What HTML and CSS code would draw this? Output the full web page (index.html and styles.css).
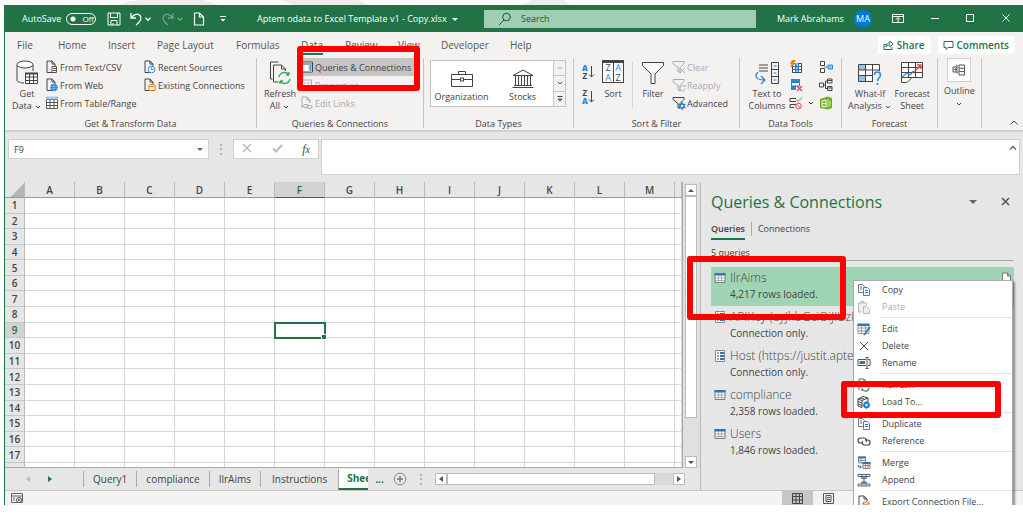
FILE: index.html
```html
<!DOCTYPE html>
<html lang="en">
<head>
  <meta charset="UTF-8">
  <meta name="viewport" content="width=device-width, initial-scale=1.0">
  <title>Aptem odata to Excel Template v1 - Copy.xlsx</title>
  <link rel="stylesheet" href="styles.css">
</head>
<body>
  <!-- Shared icons -->
  <svg class="sprite">
    <symbol id="i-page" viewBox="0 0 14 14"><path d="M7 12.500H2V1h5l3 3v2M7 1v3h3" fill="none" stroke="#444"/></symbol>
    <symbol id="i-table" viewBox="0 0 12 12"><path d="M1 1.500h10v9H1z" fill="#fff" stroke="#777"/><path d="M1 6h10M1 8.500h10M4.500 3v7.500M7.500 3v7.500" stroke="#aaa"/><path d="M.5 1h11v2.500H.5z" fill="#2f75b5"/></symbol>
    <symbol id="i-param" viewBox="0 0 12 12"><path d="M1.500 .5h9v11h-9z" fill="#fff" stroke="#888"/><path d="M3 3h2M3 6h2M3 9h2" stroke="#555"/><path d="M6 2h4v2H6zM6 5h4v2H6zM6 8h4v2H6z" fill="#2f75b5"/></symbol>
    <symbol id="i-copy" viewBox="0 0 14 14"><path d="M1.500 1.500h4l2 2v6h-6z" fill="#fff" stroke="#777"/><path d="M6.500 4.500h4l2 2v6h-6z" fill="#fff" stroke="#777"/><path d="M3 4h2M3 6h2M8 7.500h3M8 9.500h3" stroke="#2f75b5"/></symbol>
    <symbol id="i-down" viewBox="0 0 8 8"><path d="M2 3l2 2 2-2" fill="none" stroke="currentColor"/></symbol>
    <symbol id="i-funnel" viewBox="0 0 14 14"><path d="M1 1.500h11v2L8 7.500V12H6V7.500L1 3.500z" fill="none" stroke="currentColor"/></symbol>
  </svg>

  <svg class="backdrop" viewBox="0 0 1023 5" preserveAspectRatio="none"><path d="M115 5Q125 1 135 0H200L216 5zM277 0H355L366 5H290zM519 5L530 0H562L568 5z" fill="#ececec"/></svg>

  <div class="window">
    <header class="title-bar">
      <label class="autosave">AutoSave <input type="checkbox" class="switch"><span class="switch-off">Off</span></label>
      <div class="quick">
        <button aria-label="Save"><svg width="14" height="14" viewBox="0 0 14 14"><path d="M1 1h12v12H1zM3.500 1v4.500h7V1M4 13V8.500h6V13M6 13v-2" fill="none" stroke="#fff"/></svg></button>
        <button aria-label="Undo"><svg width="14" height="14" viewBox="0 0 14 14"><path d="M2 1v5h5M2 6C5 2 9 1 11 3.500S12 9 7 13" fill="none" stroke="#fff" stroke-width="1.300"/></svg><svg width="10" height="10"><use href="#i-down"/></svg></button>
        <button aria-label="Redo" class="faded"><svg width="14" height="14" viewBox="0 0 14 14"><path d="M12 1v5H7M12 6C9 2 5 1 3 3.500S2 9 7 13" fill="none" stroke="#fff" stroke-width="1.300"/></svg><svg width="10" height="10"><use href="#i-down"/></svg></button>
        <button aria-label="New"><svg width="12" height="14" viewBox="0 0 12 14"><path d="M1.500 1h5l4 4v8h-9zM6.500 1v4h4" fill="none" stroke="#fff" stroke-width="1.200"/></svg></button>
        <button aria-label="Customise" class="customise"><svg width="8" height="8" viewBox="0 0 8 8"><path d="M1 1.500h6" stroke="#fff"/><path d="M1.500 4h5L4 6.500z" fill="#fff"/></svg></button>
      </div>
      <div class="doc-name">Aptem odata to Excel Template v1 - Copy.xlsx <span class="caret"></span></div>
      <label class="search"><svg width="14" height="14" viewBox="0 0 14 14"><circle cx="8.500" cy="5" r="3.800" fill="none" stroke="#185c37"/><path d="M6 8L1 13" stroke="#185c37"/></svg><input type="text" placeholder="Search" aria-label="Search"></label>
      <div class="account">Mark Abrahams <span class="avatar">MA</span></div>
      <div class="win-buttons">
        <button aria-label="Ribbon options"><svg width="12" height="10" viewBox="0 0 12 10"><path d="M.5 .5h11v8H.5zM.5 2.500h11M6 8V4M4 5.500l2-2 2 2" fill="none" stroke="#fff"/></svg></button>
        <button aria-label="Minimise"><svg width="10" height="10" viewBox="0 0 10 10"><path d="M1 4.500h8" stroke="#fff"/></svg></button>
        <button aria-label="Maximise"><svg width="10" height="10" viewBox="0 0 10 10"><path d="M1.500 .5h7v7h-7z" fill="none" stroke="#fff"/></svg></button>
        <button aria-label="Close"><svg width="10" height="10" viewBox="0 0 10 10"><path d="M1.500 .5l7 7M8.500 .5l-7 7" stroke="#fff"/></svg></button>
      </div>
    </header>

    <nav class="tabs">
      <a href="#" class="t-file">File</a>
      <a href="#" class="t-home">Home</a>
      <a href="#" class="t-insert">Insert</a>
      <a href="#" class="t-layout">Page Layout</a>
      <a href="#" class="t-formulas">Formulas</a>
      <a href="#" class="t-data active">Data</a>
      <a href="#" class="t-review">Review</a>
      <a href="#" class="t-view">View</a>
      <a href="#" class="t-dev">Developer</a>
      <a href="#" class="t-help">Help</a>
      <button class="pill"><svg width="11" height="11" viewBox="0 0 11 11"><path d="M3 4.500H1v5h8V7M3 7c0-3 2-4 4-4V1l3 3-3 3V5C5 5 4 5.500 3 7z" fill="none" stroke="#217346"/></svg>Share</button>
      <button class="pill"><svg width="11" height="11" viewBox="0 0 11 11"><path d="M1 1.500h9v6H5L3 9.500v-2H1z" fill="none" stroke="#217346"/></svg>Comments</button>
    </nav>

    <div class="ribbon">
      <section class="group">
        <div class="tools get">
          <button class="big"><svg width="24" height="26" viewBox="0 0 24 26"><path d="M2 5v15c0 2 4 3 7 3M18 5v6" fill="none" stroke="#444"/><ellipse cx="10" cy="4.500" rx="8" ry="3.500" fill="#fafafa" stroke="#444"/><path d="M10.500 13.500h12v10h-12zM10.500 17h12M10.500 20.500h12M14.500 14v9M18.500 14v9" fill="#fff" stroke="#444"/><path d="M10 12.500h13v2H10z" fill="#444"/></svg>Get<br>Data <svg width="8" height="8"><use href="#i-down"/></svg></button>
          <div class="list">
            <button><svg width="14" height="14" viewBox="0 0 14 14"><use href="#i-page"/><path d="M7 6.500h4.500v6H7zM8 8.500h3M8 10.500h3" fill="#fff" stroke="#555"/></svg>From Text/CSV</button>
            <button><svg width="14" height="14" viewBox="0 0 14 14"><use href="#i-page"/><circle cx="9" cy="9.500" r="3.700" fill="#2b88d8"/><path d="M6 8.500h6M6 10.500h6M9 6v7" stroke="#8cc5f2" stroke-width=".6"/></svg>From Web</button>
            <button><svg width="14" height="14" viewBox="0 0 14 14"><path d="M1.500 3.500h11v9h-11zM1.500 6.500h11M1.500 9.500h11M5 4v8M9 4v8" fill="#fff" stroke="#555"/><path d="M1 .5h3.500v3H1zM5.300 .5h3.500v3H5.300zM9.600 .5H13v3H9.600z" fill="#8cc5f2"/></svg>From Table/Range</button>
          </div>
          <div class="list">
            <button><svg width="14" height="14" viewBox="0 0 14 14"><use href="#i-page"/><circle cx="8.500" cy="9.500" r="3.300" fill="#fff" stroke="#2b88d8"/><path d="M8.500 7.500v2h2" fill="none" stroke="#2b88d8"/></svg>Recent Sources</button>
            <button><svg width="14" height="14" viewBox="0 0 14 14"><use href="#i-page"/><path d="M6 7.500v5h6v-5z" fill="#fff" stroke="#e0761a"/><ellipse cx="9" cy="7.500" rx="3" ry="1.200" fill="#fff" stroke="#e0761a"/></svg>Existing Connections</button>
          </div>
        </div>
        <h2>Get &amp; Transform Data</h2>
      </section>

      <section class="group">
        <div class="tools refresh">
          <button class="big"><svg width="24" height="26" viewBox="0 0 24 26"><path d="M2.500 19V2h8M5.500 22V5h8l4 4v2M13.500 5v4h4M5.500 22h5M2.500 19h2" fill="none" stroke="#444"/><path d="M11 17c1-5 8-6 10-2v-3M21 15h-3M22 19c-1 5-8 6-10 2v3M12 21h3" fill="none" stroke="#33a852" stroke-width="1.300"/></svg>Refresh<br>All <svg width="8" height="8"><use href="#i-down"/></svg></button>
          <div class="list">
            <button class="on"><svg width="12" height="12" viewBox="0 0 12 12"><path d="M.5 1h11v10H.5zM.5 3h11" fill="#fff" stroke="#444"/><path d="M7.500 3.500h3.500V11H7.500z" fill="#8cc5f2"/><path d="M9 5h1M9 7h1M9 9h1" stroke="#2f75b5"/></svg>Queries &amp; Connections</button>
            <button disabled><svg width="12" height="12" viewBox="0 0 12 12"><path d="M1.500 1h9v10h-9zM3 4h2M6 4h3M3 7h2M6 7h3" fill="none" stroke="#aaa"/></svg>Properties</button>
            <button disabled><svg width="12" height="14" viewBox="0 0 12 14"><path d="M1 12V1h5l3 3v3M6 1v3h3" fill="none" stroke="#aaa"/><rect x="2.500" y="8.500" width="5" height="3" rx="1.500" fill="none" stroke="#aaa"/><rect x="6" y="9.500" width="5" height="3" rx="1.500" fill="none" stroke="#aaa"/></svg>Edit Links</button>
          </div>
        </div>
        <h2>Queries &amp; Connections</h2>
      </section>

      <section class="group">
        <div class="tools types">
          <div class="gallery">
            <button><svg width="24" height="20" viewBox="0 0 24 20"><path d="M1.500 5.500h21v12h-21zM8.500 5V2.500h7V5M1.500 10.500H10M14 10.500h8.500" fill="none" stroke="#444"/><rect x="10.500" y="9" width="3" height="3" fill="#fff" stroke="#444"/></svg>Organization</button>
            <button><svg width="24" height="20" viewBox="0 0 24 20"><path d="M2 6.500L12 1l10 5.500zM1.500 18.500h21M3 16.500h18M4.500 7v9M7.500 7v9M10.500 7v9M13.500 7v9M16.500 7v9M19.500 7v9" fill="none" stroke="#444"/></svg>Stocks</button>
            <div class="gallery-nav">
              <button aria-label="Up" disabled><svg width="8" height="8" viewBox="0 0 8 8"><path d="M2 5l2-2 2 2" fill="none" stroke="#aaa"/></svg></button>
              <button aria-label="Down"><svg width="8" height="8"><use href="#i-down"/></svg></button>
              <button aria-label="More"><svg width="8" height="8" viewBox="0 0 8 8"><path d="M1.500 1.500h5M2 4l2 2 2-2z" fill="none" stroke="#444"/></svg></button>
            </div>
          </div>
        </div>
        <h2>Data Types</h2>
      </section>

      <section class="group">
        <div class="tools sort">
          <div class="az">
            <button aria-label="Sort A to Z"><span class="letters"><b>A</b><i>Z</i></span><svg width="7" height="14" viewBox="0 0 7 14"><path d="M3.500 1v11M1 9.500L3.500 12 6 9.500" fill="none" stroke="#444"/></svg></button>
            <button aria-label="Sort Z to A"><span class="letters"><i>Z</i><b>A</b></span><svg width="7" height="14" viewBox="0 0 7 14"><path d="M3.500 1v11M1 9.500L3.500 12 6 9.500" fill="none" stroke="#444"/></svg></button>
          </div>
          <button class="big"><span class="sort-box"><i>Z</i><b>A</b><b>A</b><i>Z</i></span>Sort</button>
          <span class="rule"></span>
          <button class="big"><svg width="24" height="26" viewBox="0 0 24 26"><path d="M1.500 2.500h21v3L14 14v9.500h-4V14L1.500 5.500z" fill="#fafafa" stroke="#444"/></svg>Filter</button>
          <div class="list">
            <button disabled><svg width="14" height="14" viewBox="0 0 14 14"><use href="#i-funnel"/><path d="M8 8l5 5M13 8l-5 5" stroke="#aaa"/></svg>Clear</button>
            <button disabled><svg width="14" height="14" viewBox="0 0 14 14"><use href="#i-funnel"/><path d="M8 10c0-3 4-3 5-1V7M13 10.500c0 3-4 3-5 1v2" fill="none" stroke="#aaa"/></svg>Reapply</button>
            <button><svg width="14" height="14" viewBox="0 0 14 14"><use href="#i-funnel"/><path d="M10 6v8M6.500 8l7 4M13.500 8l-7 4" stroke="#1e7fd0" stroke-width="1.300"/><circle cx="10" cy="10" r="2" fill="#fff" stroke="#1e7fd0" stroke-width="1.500"/></svg>Advanced</button>
          </div>
        </div>
        <h2>Sort &amp; Filter</h2>
      </section>

      <section class="group">
        <div class="tools data">
          <button class="big"><svg width="26" height="26" viewBox="0 0 26 26"><path d="M5 5h9M5 8h9M5 11h9M17.500 2.500h7v21h-7zM17.500 9.500h7M17.500 16.500h7" fill="none" stroke="#444"/><path d="M19.500 6h3M19.500 13h3M19.500 20h3" stroke="#2b88d8"/><path d="M4 12c-4 4-2 8 6 8M7 16l4 4-4 4" fill="none" stroke="#2b88d8" stroke-width="1.300"/></svg>Text to<br>Columns</button>
          <div class="mini">
            <button aria-label="Flash Fill"><svg width="14" height="14" viewBox="0 0 14 14"><path d="M3.500 3.500h9v9h-9z" fill="#fff" stroke="#444"/><path d="M6 3h3v9H6z" fill="#8cc5f2"/><path d="M3.500 6.500h9M3.500 9.500h9M9.500 3.500v9M6.500 3.500v9" stroke="#2f75b5"/><path d="M3 0h4L5 3h2L1 8l1.500-4H1z" fill="#f07d18"/></svg></button>
            <button aria-label="Consolidate"><svg width="14" height="14" viewBox="0 0 14 14"><path d="M1.500 1.500h4v4h-4zM1.500 8.500h4v4h-4z" fill="#fff" stroke="#444"/><path d="M5 7h4" stroke="#2b88d8"/><path d="M9 5h4.500v4H9z" fill="#8cc5f2" stroke="#2b88d8"/></svg></button>
            <button aria-label="Remove Duplicates"><svg width="14" height="14" viewBox="0 0 14 14"><path d="M2 1h9v3H2zM2 8h5v4H2z" fill="#2b88d8"/><path d="M2.500 4.500h8V8h-8z" fill="#fff" stroke="#2f75b5"/><path d="M8 8l5 5M13 8l-5 5" stroke="#e8404a" stroke-width="1.200"/></svg></button>
            <button aria-label="Relationships"><svg width="14" height="14" viewBox="0 0 14 14"><path d="M.5 5h4v4h-4zM8.500 1h4.500v4H8.500zM8.500 8.500h4.500v4H8.500zM8.500 2.500H13M8.500 10H13M4.500 7h2M8 3H6.500v7.500H8" fill="none" stroke="#444"/></svg></button>
            <button aria-label="Data Validation" class="wide"><svg width="14" height="14" viewBox="0 0 14 14"><path d="M7 2.500H1v3h6M7 8.500H1v3h4" fill="none" stroke="#444"/><path d="M7 3.500l2 2 4-4" fill="none" stroke="#33a852"/><circle cx="9.500" cy="10" r="2.800" fill="#fff" stroke="#e8404a"/><path d="M7.500 8l4 4" stroke="#e8404a"/></svg><svg width="8" height="8"><use href="#i-down"/></svg></button>
            <button aria-label="Data Model"><svg width="14" height="14" viewBox="0 0 14 14"><path d="M1 3l8-2.500L13 2v10l-4 1.500L1 12z" fill="#70ad23"/><path d="M3 5l4-1v7l-4-.5zM3 7.700h4" fill="none" stroke="#fff"/><path d="M9 3v8.500M11 4.500v6" stroke="#d3eab0"/></svg></button>
          </div>
        </div>
        <h2>Data Tools</h2>
      </section>

      <section class="group">
        <div class="tools forecast">
          <button class="big"><svg width="26" height="26" viewBox="0 0 26 26"><path d="M1.500 4.500h21v17h-21z" fill="#fff" stroke="#444"/><path d="M2 5h6v5H2zM2 15h6v6H2z" fill="#8cc5f2"/><path d="M1.500 10h21M1.500 15.500h21M8.500 4.500v17M15.500 4.500v17" stroke="#444"/><path d="M16 11h8v13h-8z" fill="#f3f2f1"/><path d="M17.500 15c0-4 6-4 6 0 0 3-3 3-3 6M20.500 23v2" fill="none" stroke="#2b88d8" stroke-width="1.600"/></svg>What-If<br>Analysis <svg width="8" height="8"><use href="#i-down"/></svg></button>
          <button class="big"><svg width="24" height="26" viewBox="0 0 24 26"><path d="M1.500 2.500h21v15H12L7 22.500H1.500z" fill="#fff" stroke="#444"/><path d="M1.500 7.500h21M1.500 12.500h21M1.500 17.500H12M8.500 2.500v15M15.500 2.500v15" stroke="#444"/><path d="M2 17l5-4 3 2 3-3" fill="none" stroke="#2b88d8" stroke-width="1.300"/><path d="M12 12l3-1 6-6M17 5h4v4" fill="none" stroke="#e8404a" stroke-width="1.300"/></svg>Forecast<br>Sheet</button>
        </div>
        <h2>Forecast</h2>
      </section>

      <section class="group">
        <div class="tools outline">
          <button class="big"><span class="boxed"><svg width="14" height="12" viewBox="0 0 14 12"><path d="M5 3H1v5h4M7 1h5.500v10H7zM7 4.300h5.500M7 7.600h5.500M5 .5v9" fill="none" stroke="#555"/><path d="M2 5.500h3M3.500 4v3" stroke="#2b88d8"/></svg></span>Outline<br><svg width="8" height="8"><use href="#i-down"/></svg></button>
        </div>
      </section>
      <button class="collapse" aria-label="Collapse the ribbon"><svg width="10" height="8" viewBox="0 0 10 8"><path d="M1.500 5.500L5 2l3.500 3.500" fill="none" stroke="#444"/></svg></button>
    </div>

    <div class="formula-bar">
      <label class="name-box"><input type="text" value="F9" aria-label="Name box"><span class="caret dark"></span></label>
      <span class="dots">⋮</span>
      <div class="fx">
        <button aria-label="Cancel"><svg width="10" height="10" viewBox="0 0 10 10"><path d="M1 1l8 8M9 1L1 9" stroke="#bbb" stroke-width="1.500"/></svg></button>
        <button aria-label="Enter"><svg width="11" height="10" viewBox="0 0 11 10"><path d="M1 5.500L4 8.500 10 2" fill="none" stroke="#bbb" stroke-width="2"/></svg></button>
        <button aria-label="Insert function" class="fx-btn">f<small>x</small></button>
      </div>
      <div class="formula"><textarea aria-label="Formula"></textarea><svg width="8" height="8" viewBox="0 0 8 8"><path d="M1 5.500l3-3 3 3" fill="none" stroke="#666" stroke-width="1.500"/></svg></div>
    </div>

    <main class="work">
      <div class="sheet">
        <div class="sheet-top">
          <div class="grid-wrap"><table class="grid" id="grid"></table></div>
          <div class="v-scroll">
            <button aria-label="Scroll up"><span class="arrow up"></span></button>
            <span class="thumb"></span>
            <button aria-label="Scroll down"><span class="arrow down"></span></button>
          </div>
        </div>
        <div class="sheet-bar">
          <div class="sheet-nav"><span class="arrow left"></span><span class="arrow right"></span></div>
          <a href="#">Query1</a>
          <a href="#">compliance</a>
          <a href="#">IlrAims</a>
          <a href="#">Instructions</a>
          <a href="#" class="current">Sheet</a>
          <span class="more">...</span>
          <button class="add" aria-label="New sheet"><svg width="14" height="14" viewBox="0 0 14 14"><circle cx="7" cy="7" r="5.800" fill="none" stroke="#888"/><path d="M4 7h6M7 4v6" stroke="#777" stroke-width="1.500"/></svg></button>
          <span class="dots">⋮</span>
          <div class="h-scroll">
            <button aria-label="Scroll left"><span class="arrow left"></span></button>
            <span class="thumb"></span>
            <button aria-label="Scroll right"><span class="arrow right"></span></button>
          </div>
        </div>
      </div>

      <aside class="pane">
        <div class="pane-head">
          <h1>Queries &amp; Connections</h1>
          <span class="caret dark"></span>
          <button aria-label="Close pane"><svg width="9" height="9" viewBox="0 0 9 9"><path d="M1 1l7 7M8 1L1 8" stroke="#555" stroke-width="1.500"/></svg></button>
        </div>
        <div class="pane-tabs"><a href="#" class="active">Queries</a><a href="#">Connections</a></div>
        <p class="count">5 queries</p>
        <ul class="queries">
          <li class="selected"><svg width="12" height="12"><use href="#i-table"/></svg><div><h3>IlrAims</h3><p>4,217 rows loaded.</p></div><svg class="peek" width="11" height="11" viewBox="0 0 11 11"><path d="M1.500 1h5l3 3v7h-8zM6.500 1v3h3" fill="#fff" stroke="#777"/></svg></li>
          <li><svg width="12" height="12"><use href="#i-param"/></svg><div><h3>APIKey (eyJhbGciOiJIUzI1N</h3><p>Connection only.</p></div></li>
          <li><svg width="12" height="12"><use href="#i-param"/></svg><div><h3>Host (https://justit.aptem.</h3><p>Connection only.</p></div></li>
          <li><svg width="12" height="12"><use href="#i-table"/></svg><div><h3>compliance</h3><p>2,358 rows loaded.</p></div></li>
          <li><svg width="12" height="12"><use href="#i-table"/></svg><div><h3>Users</h3><p>1,846 rows loaded.</p></div></li>
        </ul>
      </aside>
    </main>

    <footer class="status">
      <svg width="12" height="11" viewBox="0 0 12 11"><path d="M.5 .5h11v9H.5zM.5 3h11M2 5h2M2 7h2" fill="none" stroke="#666"/><circle cx="8" cy="7" r="2.500" fill="#eee" stroke="#555"/><circle cx="8" cy="7" r="1" fill="#555"/></svg>
      <button class="view active" aria-label="Normal view"><svg width="12" height="11" viewBox="0 0 12 11"><path d="M.5 .5h10v10H.5zM.5 3.500h10M.5 7h10M4 .5v10M7.500 .5v10" fill="none" stroke="#444"/></svg></button>
      <button class="view" aria-label="Page layout view"><svg width="12" height="11" viewBox="0 0 12 11"><path d="M.5 .5h10v10H.5zM3 2.500h5v6H3zM4 4.500h3M4 6.500h3" fill="none" stroke="#555"/></svg></button>
    </footer>

    <!-- Right click menu for the selected query -->
    <menu class="context">
      <li><button><svg width="14" height="14"><use href="#i-copy"/></svg>Copy</button></li>
      <li><button disabled><svg width="14" height="14" viewBox="0 0 14 14"><path d="M5 12H1.500V3h8v2M4 3V1.500h3V3M6.500 6.500h3l3 3v4h-6z" fill="#eee" stroke="#bbb"/></svg>Paste</button></li>
      <li class="line"><button><svg width="14" height="14" viewBox="0 0 14 14"><path d="M1 2.500h11v9H1zM1 6h11M1 9h11M4.500 4v7.500M8.500 4v7.500" fill="#fff" stroke="#999"/><path d="M.5 1.500h12v2.500H.5z" fill="#2f75b5"/><path d="M13 5l-6 8" stroke="#2f75b5" stroke-width="1.600"/></svg>Edit</button></li>
      <li><button><svg width="14" height="14" viewBox="0 0 14 14"><path d="M3 3l8 8M11 3l-8 8" stroke="#555"/></svg>Delete</button></li>
      <li><button><svg width="14" height="14" viewBox="0 0 14 14"><path d="M9 3.500H1v6h8M11 3.500h2v6h-2M8.500 1.500h3M8.500 12.500h3M10 2v10" fill="none" stroke="#555"/><path d="M2.500 5H8v3H2.500z" fill="#2f75b5"/></svg>Rename</button></li>
      <li class="line"><button><svg width="14" height="14" viewBox="0 0 14 14"><path d="M2 12V1h5l3 3v1M7 1v3h3" fill="none" stroke="#666"/><path d="M5 9c0-4 5-4 7-1V6M12 10c-1 4-5 4-7 1v2" fill="none" stroke="#33904f" stroke-width="1.200"/></svg>Refresh</button></li>
      <li><button><svg width="14" height="14" viewBox="0 0 14 14"><path d="M1 4l5-2.500L11 3v4M1 4l4 1.500L11 3M1 4v7l4 1.500v-7M1 6.500L5 8M1 9l4 1.500M3.500 3L8 4.500" fill="none" stroke="#444"/><circle cx="9.500" cy="10" r="2.200" fill="#fff" stroke="#1e7fd0" stroke-width="2"/><path d="M9.500 6v2M9.500 12v2M5.500 10h2M11.500 10h2M7 7.500l1 1M12 12.500l-1-1M12 7.500l-1 1M7 12.500l1-1" stroke="#1e7fd0"/></svg>Load To...</button></li>
      <li class="line"><button><svg width="14" height="14"><use href="#i-copy"/></svg>Duplicate</button></li>
      <li><button><svg width="14" height="14" viewBox="0 0 14 14"><path d="M5 9H3.500a2.500 2.500 0 010-5H7a2.500 2.500 0 012 4M8 6h2.500a2.500 2.500 0 010 5H7.500a2.500 2.500 0 01-2-4" fill="none" stroke="#444" stroke-width="1.200"/></svg>Reference</button></li>
      <li class="line"><button><svg width="14" height="14" viewBox="0 0 14 14"><path d="M1.500 1h7v6h-7zM6 6.500h7v6H6zM6 9.500h7M8.500 7v5.500M11 7v5.500M1.500 4.500h7M4 2v5" fill="#fff" stroke="#888"/><path d="M1 .5h8v2H1zM5.500 6h8v2h-8z" fill="#2f75b5"/><path d="M1.500 9v2H4M3 9.500L4.500 11 3 12.500" fill="none" stroke="#2f75b5"/></svg>Merge</button></li>
      <li><button><svg width="14" height="14" viewBox="0 0 14 14"><path d="M1 1.500h12v2H1zM1 11h12v2H1zM5 1.500v2M9 1.500v2M5 11v2M9 11v2" fill="#fff" stroke="#666"/><path d="M7 4.500v6M4 5h6M4 9.500h6" stroke="#2f75b5" stroke-width="1.300"/></svg>Append</button></li>
      <li class="line"><button><svg width="14" height="14" viewBox="0 0 14 14"><use href="#i-page"/><ellipse cx="9" cy="8" rx="3" ry="1.300" fill="#fff" stroke="#e0761a"/><path d="M6 8v5h6V8" fill="none" stroke="#e0761a"/></svg>Export Connection File...</button></li>
    </menu>
  </div>

  <!-- Highlight boxes -->
  <div class="mark mark-ribbon"></div>
  <div class="mark mark-query"></div>
  <div class="mark mark-load"></div>

  <script>
    const columns = "ABCDEFGHIJKLM".split("");
    const grid = document.getElementById("grid");

    let html = '<thead><tr><th class="corner"></th>';
    columns.forEach(col => {
      html += `<th class="col${col === "F" ? " active" : ""}">${col}</th>`;
    });
    html += '<th></th></tr></thead><tbody>';
    for (let row = 1; row <= 17; row++) {
      html += `<tr><th class="${row === 9 ? "active" : ""}">${row}</th>`;
      columns.forEach(col => {
        html += col === "F" && row === 9 ? '<td class="cell-active"></td>' : '<td></td>';
      });
      html += '<td></td></tr>';
    }
    html += '<tr class="last"><th></th>' + '<td></td>'.repeat(columns.length + 1) + '</tr></tbody>';
    grid.innerHTML = html;
  </script>
</body>
</html>
```

FILE: styles.css
```css
* {
  box-sizing: border-box;
}
body {
  margin: 0;
  height: 100vh;
  padding: 0 0 10px 4px;
  display: flex;
  flex-direction: column;
  position: relative;
  overflow: hidden;
  background-color: white;
  font-family: "Open Sans", "Noto Sans", sans-serif;
  font-size: 9px;
  color: #444;
}
button, input, textarea {
  font: inherit;
  color: inherit;
  border: none;
  background: none;
  padding: 0;
  margin: 0;
}
a {
  color: inherit;
  text-decoration: none;
}
h1, h2, h3, p, ul, menu {
  margin: 0;
  padding: 0;
  font-weight: normal;
  list-style: none;
}
svg {
  flex-shrink: 0;
}
button:disabled {
  color: #aaa;
}
.sprite {
  display: none;
}
.backdrop {
  height: 5px;
  width: 100%;
}
.window {
  flex: 1;
  min-height: 0;
  display: flex;
  flex-direction: column;
  position: relative;
  overflow: hidden;
  border-left: 1px solid #217346;
  background-color: #e6e6e6;
}

/* Title bar */
.title-bar {
  height: 27px;
  display: flex;
  align-items: center;
  color: white;
  background-color: #217346;
}
.autosave {
  width: 102px;
  padding-left: 17px;
  display: flex;
  align-items: center;
  position: relative;
}
.switch {
  appearance: none;
  width: 30px;
  height: 12px;
  margin-left: 5px;
  border: 1px solid white;
  border-radius: 6px;
  background: radial-gradient(circle at 6px 5px, white 2px, transparent 3px);
}
.switch-off {
  position: absolute;
  right: 13px;
  font-size: 8px;
}
.quick {
  width: 150px;
  display: flex;
  align-items: center;
  gap: 8px;
}
.quick button {
  display: flex;
  align-items: center;
}
.quick .customise {
  padding-left: 6px;
}
.faded {
  opacity: 0.35;
}
.doc-name {
  width: 227px;
  white-space: nowrap;
}
.caret {
  display: inline-block;
  margin-left: 3px;
  border: 3px solid transparent;
  border-top-color: white;
  border-bottom: none;
  vertical-align: middle;
}
.caret.dark {
  border-top-color: #666;
}
.search {
  flex: 1;
  height: 18px;
  padding-left: 14px;
  display: flex;
  align-items: center;
  gap: 9px;
  background-color: #a0cdb3;
}
.search input {
  flex: 1;
  min-width: 0;
}
.search input::placeholder {
  color: #185c37;
  opacity: 1;
}
.account {
  width: 116px;
  padding-left: 21px;
  display: flex;
  align-items: center;
  justify-content: space-between;
  white-space: nowrap;
}
.avatar {
  width: 18px;
  line-height: 18px;
  border-radius: 50%;
  text-align: center;
  background-color: #0078d7;
}
.win-buttons {
  width: 151px;
  padding: 0 12px 0 20px;
  display: flex;
  justify-content: space-between;
}
.win-buttons button {
  display: flex;
}

/* Ribbon tabs */
.tabs {
  height: 26px;
  padding: 0 8px 0 12px;
  display: flex;
  align-items: center;
  font-size: 10px;
  color: #555;
  background-color: #f3f2f1;
}
.tabs a {
  line-height: 22px;
}
.t-file {
  width: 41px;
}
.t-home {
  width: 50px;
}
.t-insert {
  width: 49px;
}
.t-layout {
  width: 79px;
}
.t-formulas {
  width: 65px;
}
.t-data {
  margin-right: 22px;
}
.t-review {
  width: 53px;
}
.t-view {
  width: 43px;
}
.t-dev {
  width: 69px;
}
.tabs .active {
  padding-top: 2px;
  line-height: 16px;
  color: #217346;
  border-bottom: 2px solid #217346;
}
.t-help {
  margin-right: auto;
}
.pill {
  height: 18px;
  margin-left: 7px;
  padding: 0 6px 0 5px;
  display: flex;
  align-items: center;
  gap: 3px;
  font-weight: 600;
  color: #217346;
  background-color: white;
  border-radius: 2px;
}

/* Ribbon */
.ribbon {
  height: 74px;
  display: grid;
  grid-template-columns: 252px 167px 150px 166px 102px 96px 44px 1fr;
  background-color: #f3f2f1;
  border-bottom: 2px solid #d2d0ce;
}
.group {
  height: 70px;
  display: flex;
  flex-direction: column;
  border-right: 1px solid #c8c6c4;
}
.group h2 {
  font-size: 9px;
  line-height: 9px;
  text-align: center;
}
.tools {
  flex: 1;
  display: flex;
  align-items: flex-start;
}
.big {
  line-height: 12px;
  text-align: center;
  white-space: nowrap;
}
.big > svg:first-child, .sort-box, .boxed {
  display: block;
  margin: 2px auto 2px;
}
.big svg {
  vertical-align: middle;
}
.list button {
  height: 18px;
  display: flex;
  align-items: center;
  gap: 1px;
  white-space: nowrap;
}
.get {
  padding-left: 5px;
}
.get .big {
  width: 34px;
}
.get .list {
  width: 98px;
  padding-left: 1px;
}
.refresh {
  padding-left: 6px;
}
.refresh .big {
  width: 34px;
}
.refresh .list svg {
  margin-right: 1px;
}
.list .on {
  width: 120px;
  padding-left: 2px;
  margin-left: -2px;
  background-color: #c5c5c5;
}
.refresh .list {
  padding-left: 4px;
}
.types {
  padding: 2px 7px 0 6px;
}
.gallery {
  flex: 1;
  height: 47px;
  display: grid;
  grid-template-columns: 61px 1fr 12px;
  background-color: white;
  border: 1px solid #c8c6c4;
}
.gallery > button {
  padding-top: 5px;
  line-height: 15px;
}
.gallery svg {
  display: block;
  margin: 0 auto;
}
.gallery-nav {
  display: grid;
  border-left: 1px solid #c8c6c4;
  background-color: #f3f2f1;
}
.gallery-nav button + button {
  border-top: 1px solid #c8c6c4;
}
.sort {
  padding-left: 8px;
}
.az {
  width: 18px;
  padding-top: 6px;
  display: grid;
  gap: 9px;
}
.az button {
  display: flex;
  align-items: center;
}
.letters {
  display: grid;
  line-height: 8px;
  font-size: 8px;
  font-weight: bold;
}
.letters i, .sort-box i {
  font-style: normal;
}
.letters b, .sort-box b {
  color: #2b88d8;
}
.sort-box b {
  font-weight: normal;
}
.sort-box {
  width: 22px;
  height: 23px;
  margin-bottom: 5px;
  display: grid;
  grid-template-columns: 1fr 1fr;
  line-height: 9px;
  background: linear-gradient(#444, #444) center / 1px 100% no-repeat white;
  border: 1px solid #444;
  border-top-width: 3px;
}
.sort .big {
  width: 26px;
}
.rule {
  width: 1px;
  height: 46px;
  margin: 4px 7px 0 6px;
  background-color: #d8d6d4;
}
.sort .list {
  padding-left: 6px;
}
.data {
  padding-left: 6px;
}
.data .big {
  width: 42px;
}
.mini {
  width: 48px;
  padding-left: 1px;
  display: grid;
  grid-template-columns: 30px 14px;
}
.mini button {
  height: 18px;
  display: flex;
  align-items: center;
}
.mini .wide {
  gap: 4px;
}
.forecast {
  padding: 0 7px 0 6px;
  justify-content: space-between;
}
.outline {
  justify-content: center;
}
.boxed {
  width: 24px;
  height: 24px;
  margin-top: 0;
  margin-bottom: 3px;
  padding-top: 5px;
  background-color: white;
  border: 1px solid #d2d0ce;
}
.boxed svg {
  display: block;
  margin: 0 auto;
}
.collapse {
  justify-self: end;
  align-self: end;
  padding-right: 4px;
}

/* Formula bar */
.formula-bar {
  padding: 7px 3px 7px 3px;
  display: flex;
  align-items: flex-start;
}
.name-box, .fx {
  height: 20px;
  display: flex;
  align-items: center;
  background-color: white;
  border: 1px solid #cfcfcf;
}
.name-box {
  width: 201px;
  padding: 0 5px;
}
.name-box input {
  flex: 1;
}
.dots {
  width: 24px;
  line-height: 20px;
  font-size: 12px;
  text-align: center;
  color: #999;
}
.fx {
  width: 86px;
  padding: 0 8px;
  justify-content: space-between;
}
.fx-btn {
  font-family: "Liberation Serif", serif;
  font-size: 12px;
  font-style: italic;
}
.fx-btn small {
  font-size: 10px;
}
.formula {
  flex: 1;
  height: 36px;
  margin-left: 2px;
  padding: 4px 2px 4px 4px;
  display: flex;
  background-color: white;
  border: 1px solid #cfcfcf;
}
.formula textarea {
  flex: 1;
  height: 26px;
  resize: none;
}

/* Worksheet */
.work {
  flex: 1;
  min-height: 0;
  display: flex;
}
.sheet {
  flex: 1;
  min-width: 0;
  display: flex;
  flex-direction: column;
  border-right: 1px solid #bbb;
}
.sheet-top {
  flex: 1;
  min-height: 0;
  display: flex;
}
.grid-wrap {
  flex: 1;
  min-width: 0;
  overflow: hidden;
  border-right: 1px solid #aaa;
  border-bottom: 1px solid #aaa;
}
.grid {
  width: 100%;
  height: 100%;
  table-layout: fixed;
  border-collapse: separate;
  border-spacing: 0;
  background-color: white;
}
.grid th {
  padding: 0;
  font-size: 10px;
  line-height: 14px;
  font-weight: 600;
  background-color: #e6e6e6;
  border-right: 1px solid #bbb;
  border-bottom: 1px solid #c6c6c6;
}
.grid thead th {
  height: 16px;
  border-bottom-color: #999;
}
.grid .col {
  width: 50px;
}
.grid .corner {
  width: 20px;
  background: linear-gradient(135deg, #e6e6e6 60%, #b5b5b5 60%);
}
.grid td {
  padding: 0;
  border-right: 1px solid #d6d6d6;
  border-bottom: 1px solid #d6d6d6;
}
.grid .active {
  color: #217346;
  background-color: #d2d2d2;
}
.grid thead .active {
  border-bottom: 1px solid #217346;
}
.grid .last th, .grid .last td {
  height: 4px;
  border-bottom: none;
}
.grid .cell-active {
  position: relative;
  outline: 2px solid #217346;
  outline-offset: -1px;
}
.cell-active::after {
  content: "";
  position: absolute;
  right: -2px;
  bottom: -2px;
  width: 4px;
  height: 4px;
  background-color: #217346;
  outline: 1px solid white;
}
.v-scroll {
  width: 17px;
  padding: 2px 3px 0 2px;
  display: flex;
  flex-direction: column;
  background-color: #e0e0e0;
}
.v-scroll button, .h-scroll button {
  width: 12px;
  height: 12px;
  display: flex;
  align-items: center;
  justify-content: center;
  background-color: white;
  border: 1px solid #bbb;
}
.thumb {
  background-color: white;
  border: 1px solid #bbb;
}
.v-scroll .thumb {
  height: 222px;
  margin-bottom: auto;
}
.arrow {
  border: 3px solid transparent;
}
.arrow.up {
  border-bottom-color: #555;
  border-top: none;
}
.arrow.down {
  border-top-color: #555;
  border-bottom: none;
}
.arrow.left {
  border-right: 4px solid #555;
  border-left: none;
}
.arrow.right {
  border-left: 4px solid #555;
  border-right: none;
}
.sheet-bar {
  height: 22px;
  padding-right: 15px;
  display: flex;
  align-items: center;
  font-size: 10px;
}
.sheet-nav {
  width: 78px;
  padding-left: 21px;
  display: flex;
  gap: 18px;
}
.sheet-nav .left {
  border-right-color: #bbb;
}
.sheet-nav .right {
  border-left-color: #217346;
}
.sheet-bar a {
  padding: 0 9px;
  line-height: 16px;
  border-left: 1px solid #aaa;
}
.sheet-bar a:nth-of-type(4) {
  padding: 0 11px;
}
.sheet-bar .current {
  width: 30px;
  padding-left: 8px;
  padding-right: 0;
  overflow: hidden;
  line-height: 19px;
  font-weight: bold;
  color: #217346;
  background-color: white;
  border-bottom: 2px solid #217346;
}
.more {
  padding: 0 9px 0 7px;
  font-weight: bold;
  color: #217346;
}
.add {
  display: flex;
}
.sheet-bar .dots {
  width: 28px;
}
.h-scroll {
  flex: 1;
  display: flex;
  background-color: #dadada;
}
.h-scroll .thumb {
  width: 208px;
  margin-right: auto;
}

/* Queries pane */
.pane {
  width: 322px;
  padding: 9px 9px 0 10px;
  overflow: hidden;
}
.pane-head {
  display: flex;
  align-items: center;
  padding-right: 4px;
}
.pane-head h1 {
  flex: 1;
  font-size: 16px;
  line-height: 22px;
  color: #217346;
}
.pane-head .caret {
  margin-right: 24px;
  border-width: 4px;
  border-bottom: none;
}
.pane-tabs {
  padding-top: 9px;
  display: flex;
}
.pane-tabs a {
  line-height: 14px;
  margin-right: 6px;
}
.pane-tabs a + a {
  padding-left: 6px;
  border-left: 1px solid #aaa;
  margin-bottom: 4px;
}
.pane-tabs .active {
  padding-bottom: 2px;
  font-weight: 600;
  border-bottom: 2px solid #217346;
}
.count {
  padding-top: 6px;
  line-height: 14px;
  border-bottom: 1px solid #aaa;
}
.queries {
  padding-top: 6px;
}
.queries li {
  height: 39px;
  padding: 2px 2px 0 3px;
  display: flex;
  gap: 4px;
  white-space: nowrap;
}
.queries li > svg {
  margin-top: 3px;
}
.queries div {
  flex: 1;
}
.queries .selected {
  background-color: #9fd5b5;
}
.queries h3 {
  font-size: 12px;
  line-height: 17px;
  font-weight: 300;
}
.queries p {
  font-size: 10px;
  line-height: 16px;
}

/* Status bar */
.status {
  height: 15px;
  padding-left: 6px;
  display: flex;
  align-items: center;
  background-color: #f3f2f1;
  border-top: 1px solid #c6c6c6;
}
.view {
  width: 31px;
  height: 14px;
  display: flex;
  align-items: center;
  justify-content: center;
}
.view.active {
  margin-left: auto;
  background-color: #c6c6c6;
}
.view:last-child {
  margin-right: 179px;
}

/* Context menu */
.context {
  position: absolute;
  top: 275px;
  right: 10px;
  width: 160px;
  background-color: white;
  border: 1px solid #aaa;
  box-shadow: 2px 2px 2px rgba(0, 0, 0, 0.4);
}
.context button {
  height: 17px;
  padding-left: 3px;
  display: flex;
  align-items: center;
  gap: 11px;
  white-space: nowrap;
}
.context .line {
  padding-top: 5px;
  background: linear-gradient(#e1e1e1, #e1e1e1) right 2px / 132px 1px no-repeat;
}

/* Highlight boxes */
.mark {
  position: absolute;
  border: 6px solid #ff0000;
  border-radius: 3px;
}
.mark-ribbon {
  left: 297px;
  top: 46px;
  width: 123px;
  height: 45px;
}
.mark-query {
  right: 177px;
  top: 256px;
  width: 159px;
  height: 64px;
}
.mark-load {
  right: 22px;
  top: 381px;
  width: 160px;
  height: 37px;
}
```
